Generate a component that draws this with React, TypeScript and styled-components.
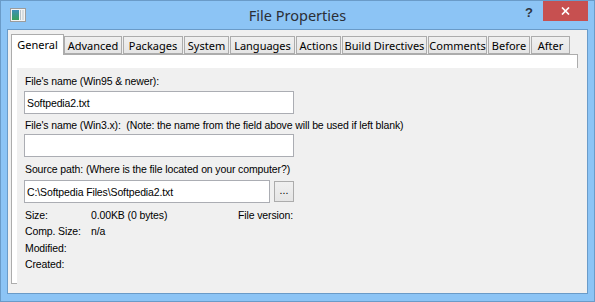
import React from "react";
import styled, { createGlobalStyle } from "styled-components";

const GlobalStyle = createGlobalStyle`
  html, body {
    margin: 0;
    padding: 0;
    width: 595px;
    height: 302px;
    overflow: hidden;
    background: #8cc4f5;
  }
  * {
    box-sizing: border-box;
  }
`;

const frameBlue = "#8cc4f5";
const edgeBlue = "#6a9bc8";
const uiFont = `"Liberation Sans", Arial, sans-serif`;
const tabFont = `"Noto Sans", "Open Sans", sans-serif`;

const Window = styled.div`
  width: 595px;
  height: 302px;
  border: 1px solid ${edgeBlue};
  background: ${frameBlue};
  display: flex;
  flex-direction: column;
`;

const TitleBar = styled.div`
  height: 28px;
  display: grid;
  grid-template-columns: 1fr auto 1fr;
  align-items: start;
`;

const IconSlot = styled.div`
  padding: 7px 0 0 9px;
  display: flex;
`;

const Title = styled.div`
  font-family: ${tabFont};
  font-size: 14.5px;
  color: #2b2f36;
  line-height: 20px;
  padding-top: 4px;
  white-space: nowrap;
`;

const Controls = styled.div`
  display: flex;
  justify-content: flex-end;
  align-items: flex-start;
`;

const HelpButton = styled.div`
  font-family: ${uiFont};
  font-weight: bold;
  font-size: 13px;
  color: #2e3440;
  line-height: 16px;
  padding-top: 4px;
  margin-right: 10px;
`;

const CloseButton = styled.div`
  width: 45px;
  height: 20px;
  background: #c75050;
  margin-right: 6px;
  display: flex;
  align-items: center;
  justify-content: center;
`;

const Client = styled.div`
  flex: 1;
  margin: 0 6px 7px 6px;
  border: 1px solid ${edgeBlue};
  background: #f0f0f0;
  padding: 4px 0 0 3px;
  overflow: hidden;
`;

const TabStrip = styled.div`
  display: flex;
  align-items: flex-end;
  height: 20px;
  position: relative;
  z-index: 1;
`;

const Tab = styled.div<{ $w: number; $active?: boolean }>`
  width: ${({ $w }) => $w}px;
  height: ${({ $active }) => ($active ? 21 : 18)}px;
  margin-bottom: ${({ $active }) => ($active ? -1 : 0)}px;
  margin-right: ${({ $active }) => ($active ? -1 : 0)}px;
  border: 1px solid #acacac;
  border-bottom: ${({ $active }) => ($active ? "none" : "1px solid #acacac")};
  background: ${({ $active }) =>
    $active ? "#ffffff" : "linear-gradient(#f0f0f0, #e5e5e5)"};
  font-family: ${tabFont};
  font-size: 11px;
  color: #000;
  display: flex;
  align-items: center;
  justify-content: center;
  padding-bottom: ${({ $active }) => ($active ? 2 : 0)}px;
  white-space: nowrap;

  & + & {
    margin-left: 1px;
  }
`;

const TabPage = styled.div`
  width: 567px;
  height: 230px;
  border: 1px solid #acacac;
  background: #fff;
  padding: 13px 0 0 5px;
`;

const FormPanel = styled.div`
  width: 570px;
  height: 225px;
  background: #f0f0f0;
  padding: 7px 0 0 7px;
  font-family: ${uiFont};
  font-size: 10.5px;
  letter-spacing: -0.12px;
  color: #000;
`;

const Label = styled.div<{ $gap?: number }>`
  height: 13px;
  line-height: 13px;
  margin-top: ${({ $gap }) => $gap || 0}px;
  margin-left: 1px;
  white-space: pre;
`;

const Field = styled.input<{ $w: number; $gap?: number }>`
  display: block;
  width: ${({ $w }) => $w}px;
  height: 23px;
  margin: ${({ $gap }) => $gap || 0}px 0 0 0;
  border: 1px solid #abadb3;
  background: #fff;
  padding: 0 2px;
  font-family: ${uiFont};
  font-size: 10.5px;
  letter-spacing: -0.12px;
  color: #000;
  outline: none;
`;

const PathRow = styled.div`
  display: flex;
  align-items: flex-start;
  margin-top: 4px;
`;

const BrowseButton = styled.button`
  width: 20px;
  height: 21px;
  margin: 1px 0 0 4px;
  padding: 0 0 3px 0;
  border: 1px solid #acacac;
  background: linear-gradient(#f0f0f0, #e5e5e5);
  font-family: ${uiFont};
  font-size: 10.5px;
  color: #000;
  line-height: 1;
`;

const InfoGrid = styled.div`
  display: grid;
  grid-template-columns: 66px 147px auto;
  grid-auto-rows: 16.4px;
  margin: 6px 0 0 1px;
  line-height: 13px;
`;

const WindowIcon = () => (
  <svg width="16" height="14" viewBox="0 0 16 14">
    <defs>
      <linearGradient id="pic" x1="0" y1="0" x2="0" y2="1">
        <stop offset="0" stopColor="#3f8fb8" />
        <stop offset="1" stopColor="#3aa05a" />
      </linearGradient>
    </defs>
    <rect x="0.5" y="0.5" width="15" height="13" fill="#f4f4f4" stroke="#9c9c9c" />
    <rect x="2" y="2" width="7" height="10" fill="url(#pic)" />
    <rect x="10" y="2" width="1" height="10" fill="#b9c3c9" />
    <rect x="12" y="2" width="2" height="10" fill="#d7dde0" />
  </svg>
);

const CloseGlyph = () => (
  <svg width="9" height="8" viewBox="0 0 9 8">
    <path d="M1 0.5 L8 7.5 M8 0.5 L1 7.5" stroke="#fff" strokeWidth="1.7" />
  </svg>
);

const tabs: { label: string; w: number }[] = [
  { label: "General", w: 53 },
  { label: "Advanced", w: 58 },
  { label: "Packages", w: 60 },
  { label: "System", w: 45 },
  { label: "Languages", w: 65 },
  { label: "Actions", w: 45 },
  { label: "Build Directives", w: 85 },
  { label: "Comments", w: 59 },
  { label: "Before", w: 42 },
  { label: "After", w: 39 },
];

const info: [string, string, string][] = [
  ["Size:", "0.00KB (0 bytes)", "File version:"],
  ["Comp. Size:", "n/a", ""],
  ["Modified:", "", ""],
  ["Created:", "", ""],
];

const App: React.FC = () => {
  return (
    <>
      <GlobalStyle />
      <Window>
        <TitleBar>
          <IconSlot>
            <WindowIcon />
          </IconSlot>
          <Title>File Properties</Title>
          <Controls>
            <HelpButton>?</HelpButton>
            <CloseButton>
              <CloseGlyph />
            </CloseButton>
          </Controls>
        </TitleBar>
        <Client>
          <TabStrip>
            {tabs.map((t, i) => (
              <Tab key={t.label} $w={t.w} $active={i === 0}>
                {t.label}
              </Tab>
            ))}
          </TabStrip>
          <TabPage>
            <FormPanel>
              <Label>File's name (Win95 &amp; newer):</Label>
              <Field $w={270} $gap={3} defaultValue="Softpedia2.txt" readOnly />
              <Label $gap={5}>
                {"File's name (Win3.x):  (Note: the name from the field above will be used if left blank)"}
              </Label>
              <Field $w={270} $gap={2} defaultValue="" readOnly />
              <Label $gap={6}>Source path: (Where is the file located on your computer?)</Label>
              <PathRow>
                <Field $w={246} defaultValue="C:\Softpedia Files\Softpedia2.txt" readOnly />
                <BrowseButton>...</BrowseButton>
              </PathRow>
              <InfoGrid>
                {info.map((row) =>
                  row.map((cell, j) => <span key={row[0] + j}>{cell}</span>)
                )}
              </InfoGrid>
            </FormPanel>
          </TabPage>
        </Client>
      </Window>
    </>
  );
};

export default App;
